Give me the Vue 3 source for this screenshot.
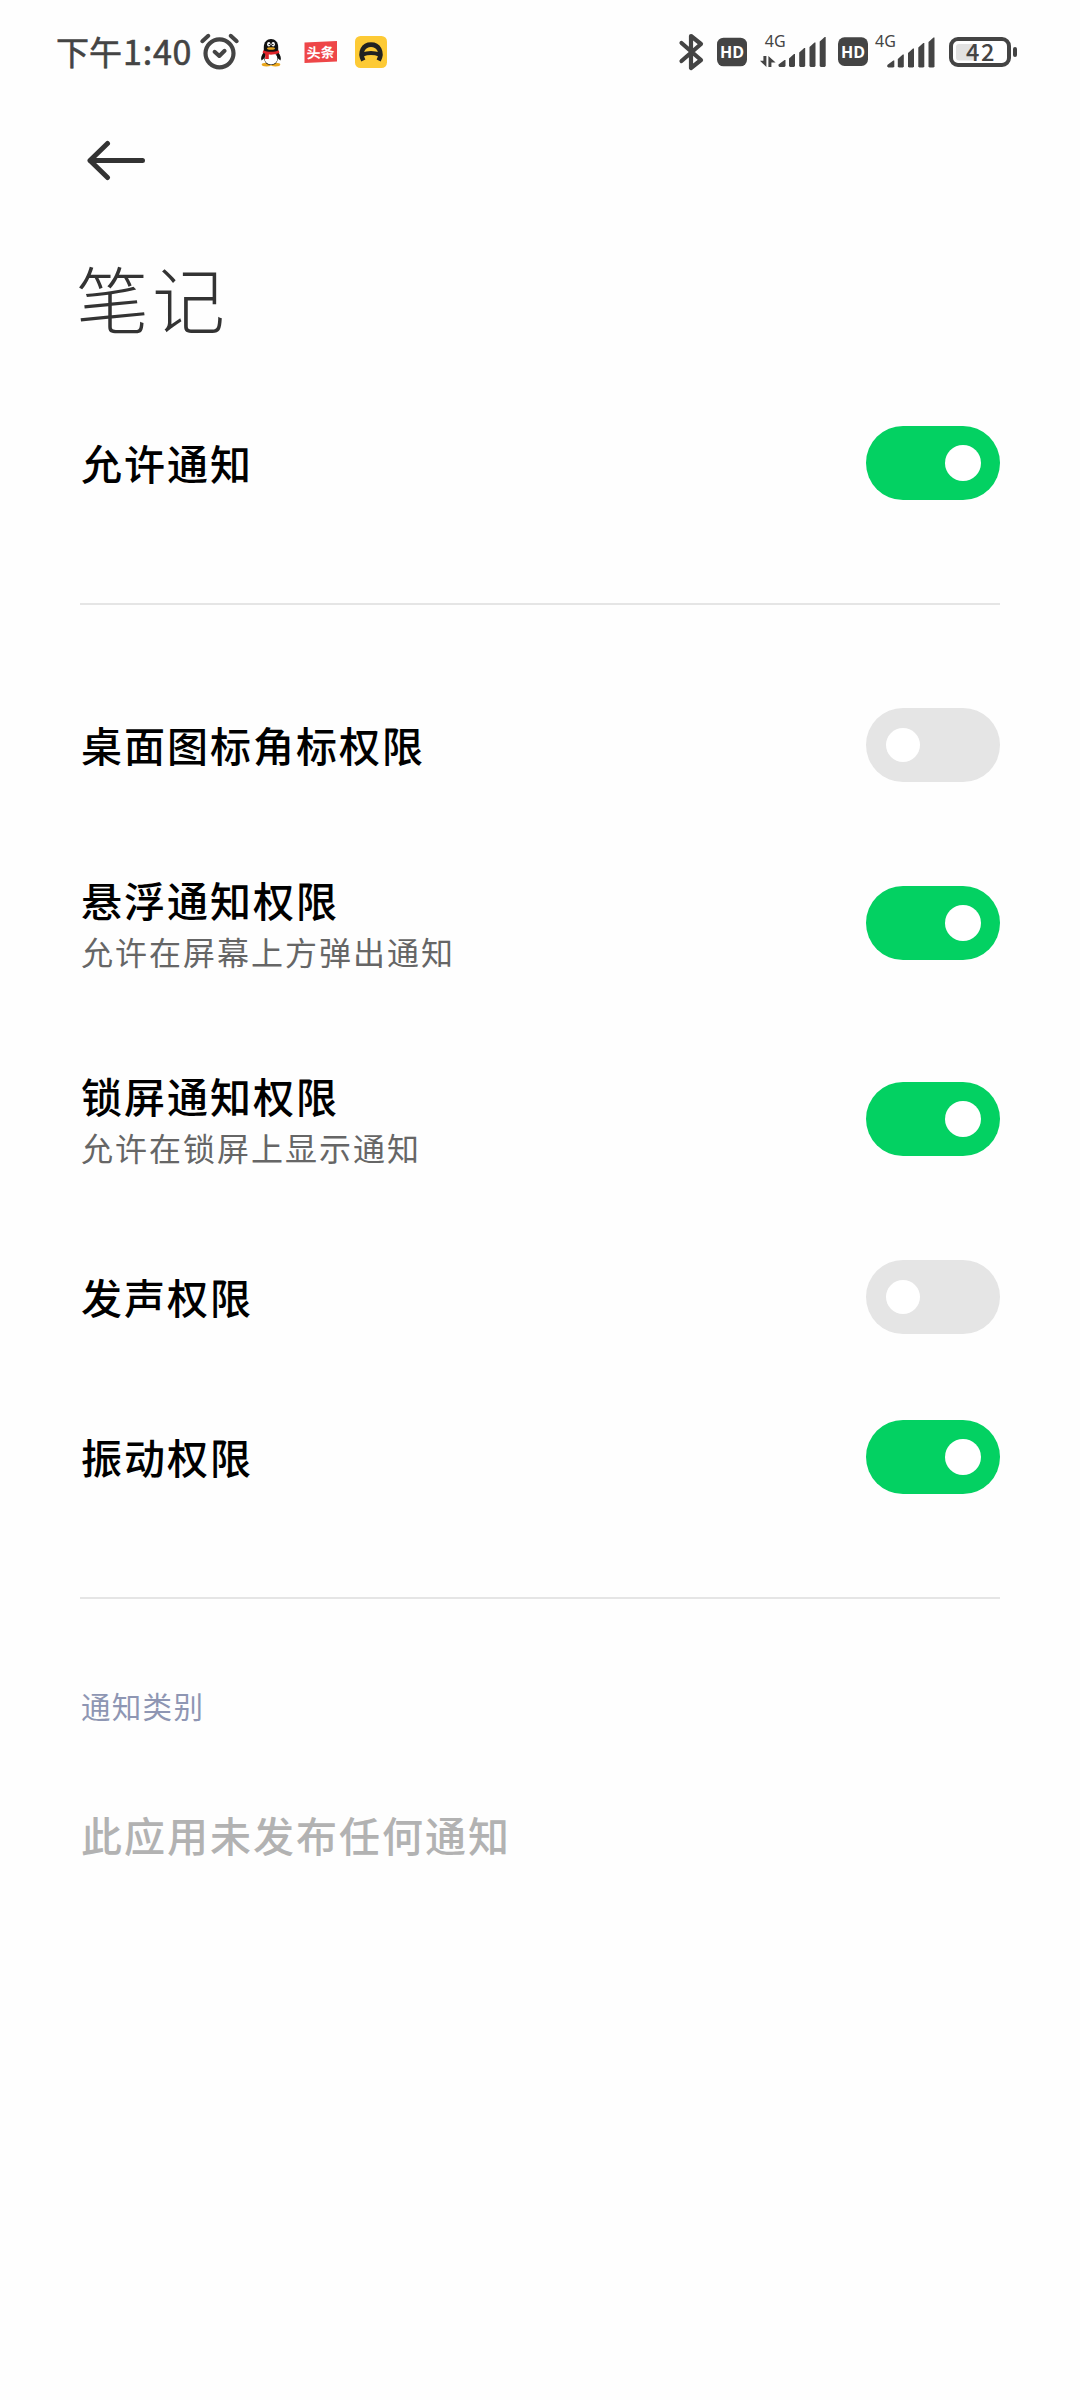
<template>
  <div class="screen">
    <!-- Status bar -->
    <header class="status-bar">
      <div class="status-left">
        <span class="clock">下午<span class="digits">1:40</span></span>

        <svg class="icon-alarm" width="40" height="40" viewBox="0 0 40 40">
          <g fill="none" stroke="#444" stroke-linecap="round" stroke-linejoin="round">
            <circle cx="19.5" cy="21.3" r="14" stroke-width="4.2" />
            <path d="M2.3 9.2 8.3 3.8M36.7 9.2 30.7 3.8" stroke-width="4" />
            <path d="M14.6 19.8 19.3 24 24.6 18.8" stroke-width="4" />
          </g>
        </svg>

        <svg class="icon-qq" width="22" height="40" viewBox="0 0 22 40">
          <ellipse cx="6.5" cy="32.6" rx="4.8" ry="1.9" fill="#e9a61c" />
          <ellipse cx="15.5" cy="32.6" rx="4.8" ry="1.9" fill="#e9a61c" />
          <path d="M4 20C1.5 23 .5 26 1.5 28.5L4 26.5C5 31 7 33 11 33S17 31 18 26.5L20.5 28.5C21.5 26 20.5 23 18 20Z" fill="#111" />
          <ellipse cx="11" cy="26.5" rx="6.4" ry="6" fill="#fff" />
          <path d="M3.8 20V15C3.8 10 7 7 11 7S18.2 10 18.2 15V20Z" fill="#111" />
          <ellipse cx="8.8" cy="12.3" rx="1.7" ry="2.2" fill="#fff" />
          <ellipse cx="13.2" cy="12.3" rx="1.7" ry="2.2" fill="#fff" />
          <circle cx="9.3" cy="12.5" r=".8" fill="#111" />
          <circle cx="12.8" cy="12.5" r=".8" fill="#111" />
          <ellipse cx="11" cy="16.5" rx="4" ry="1.3" fill="#e9a61c" />
          <path d="M3.2 18.2C8 20.3 14 20.3 18.8 18.2L19.4 20.8C15 22.8 11 23 8.8 22.6V27H5.2V21.8L2.6 20.8Z" fill="#e0242b" />
        </svg>

        <svg class="icon-toutiao" width="34" height="40" viewBox="0 0 34 40">
          <path d="M.5 10.5 33 9V29.5L.5 31Z" fill="#ee4648" />
          <text x="2.5" y="25.800" class="toutiao-text" transform="rotate(-2 17 20)">头条</text>
        </svg>

        <svg class="icon-app" width="32" height="40" viewBox="0 0 32 40">
          <rect y="4" width="32" height="32" rx="5.5" fill="#fdca35" />
          <path d="M8.300 28.500C4 20 8.500 12.600 16 12.600S28 20 23.700 28.500" fill="none" stroke="#222" stroke-width="4.600" />
          <path d="M7.500 22.500Q16 19.500 24.500 22.500" fill="none" stroke="#222" stroke-width="4" />
        </svg>
      </div>

      <div class="status-right">
        <svg class="icon-bluetooth" width="26" height="40" viewBox="0 0 26 40">
          <path d="M3.500 11 23 28 13 36V4L23 12 3.500 29" fill="none" stroke="#444" stroke-width="4.200" stroke-linecap="round" stroke-linejoin="round" />
        </svg>

        <svg class="icon-hd" width="30" height="40" viewBox="0 0 30 40">
          <rect y="5.700" width="30" height="28.600" rx="6.500" fill="#444" />
          <text x="15" y="26" class="hd-text" text-anchor="middle">HD</text>
        </svg>

        <svg class="icon-signal-data" width="67" height="40" viewBox="0 0 67 40">
          <text x="4.800" y="14.800" class="net-text">4G</text>
          <path d="M3.400 24H6.400V35L0 28.700H3.400ZM8.400 24 15.600 30.400H11.400V35H8.400Z" fill="#444" />
          <g fill="#444">
            <path v-for="bar in signalBars" :key="bar.x" :d="barPath(bar, 18.500, 35)" />
          </g>
        </svg>

        <svg class="icon-hd second" width="30" height="40" viewBox="0 0 30 40">
          <rect y="5.300" width="30" height="28.600" rx="6.500" fill="#444" />
          <text x="15" y="25.700" class="hd-text" text-anchor="middle">HD</text>
        </svg>

        <svg class="icon-signal" width="62" height="40" viewBox="0 0 62 40">
          <text x="0" y="14.800" class="net-text">4G</text>
          <g fill="#444">
            <path v-for="bar in signalBars" :key="bar.x" :d="barPath(bar, 12.300, 35.600)" />
          </g>
        </svg>

        <svg class="icon-battery" width="69" height="40" viewBox="0 0 69 40">
          <rect x="2" y="7" width="58" height="26" rx="7" fill="#fff" stroke="#444" stroke-width="4" />
          <rect x="7" y="12" width="21" height="16.5" rx="3" fill="#e2e2e2" />
          <rect x="64" y="15" width="4" height="10" rx="2" fill="#444" />
          <text x="32" y="28.600" class="battery-text" text-anchor="middle">{{ battery }}</text>
        </svg>
      </div>
    </header>

    <!-- Back button -->
    <nav class="nav">
      <button class="btn-back" title="返回">
        <svg width="60" height="42" viewBox="0 0 60 42">
          <path d="M55.5 20.500H3M20.500 3.500 3 20.500 20.500 37.500" fill="none" stroke="#333" stroke-width="5" stroke-linecap="round" stroke-linejoin="round" />
        </svg>
      </button>
    </nav>

    <h1 class="title">笔记</h1>

    <main class="settings">
      <section v-for="(group, i) in groups" :key="i" class="group">
        <div
          v-for="item in group"
          :key="item.label"
          class="row"
          :class="{ double: item.desc }"
        >
          <div class="row-text">
            <span class="label">{{ item.label }}</span>
            <span v-if="item.desc" class="desc">{{ item.desc }}</span>
          </div>
          <button
            class="toggle"
            :class="{ on: item.enabled }"
            @click="item.enabled = !item.enabled"
          >
            <span class="knob"></span>
          </button>
        </div>
      </section>
    </main>

    <h2 class="category">通知类别</h2>
    <p class="empty">此应用未发布任何通知</p>
  </div>
</template>

<script setup>
import { ref } from 'vue'

const battery = ref(42)

const groups = ref([
  [{ label: '允许通知', enabled: true }],
  [
    { label: '桌面图标角标权限', enabled: false },
    { label: '悬浮通知权限', desc: '允许在屏幕上方弹出通知', enabled: true },
    { label: '锁屏通知权限', desc: '允许在锁屏上显示通知', enabled: true },
    { label: '发声权限', enabled: false },
    { label: '振动权限', enabled: true }
  ]
])

const signalBars = [
  { x: 0, h: 7 },
  { x: 10.5, h: 13 },
  { x: 20.7, h: 19 },
  { x: 31, h: 24.5 },
  { x: 41.2, h: 30 }
]

// slanted top, left side is lower
function barPath(bar, offset, bottom) {
  const x = bar.x + offset
  const w = bar.x === 0 ? 7 : 6
  const top = bottom - bar.h
  return `M${x} ${bottom - 1}V${top + 4.5}L${x + w - 1} ${top}H${x + w}V${bottom - 1}L${x + w - 1} ${bottom}H${x + 1}Z`
}
</script>

<style>
body {
  background: #fefefe;
}
</style>

<style scoped>
.screen {
  width: 1080px;
  height: 2400px;
  box-sizing: border-box;
  background: #fefefe;
  font-family: 'Noto Sans CJK SC', sans-serif;
  overflow: hidden;
}

.status-bar {
  height: 104px;
  box-sizing: border-box;
  padding: 32px 62px 32px 56px;
  display: flex;
  justify-content: space-between;
}

.status-bar svg {
  overflow: visible;
}

.status-left,
.status-right {
  display: flex;
  align-items: center;
}

.clock {
  width: 144px;
  font-size: 33px;
  line-height: 40px;
  padding-bottom: 2px;
  color: #444;
  white-space: nowrap;
  -webkit-text-stroke: 0.6px #444;
}

.digits {
  margin-left: 1px;
  font-size: 34px;
  letter-spacing: 0.8px;
}

.icon-qq {
  margin-left: 20px;
}

.icon-toutiao {
  margin-left: 22px;
}

.icon-app {
  margin-left: 17px;
}

.icon-hd {
  margin-left: 13px;
}

.icon-hd.second {
  margin-left: 11px;
}

.icon-signal-data {
  margin-left: 13px;
}

.icon-signal {
  margin-left: 7px;
}

.icon-battery {
  margin-left: 12px;
}

.toutiao-text {
  font-size: 14px;
  font-weight: 700;
  fill: #fff;
}

.hd-text {
  font-family: 'Open Sans', sans-serif;
  font-size: 16px;
  font-weight: 700;
  fill: #fff;
}

.net-text {
  font-family: 'Noto Sans', sans-serif;
  font-size: 16px;
  fill: #444;
}

.battery-text {
  font-size: 23.5px;
  font-weight: 500;
  letter-spacing: 1.5px;
  fill: #444;
}

.nav {
  height: 116px;
  padding: 36px 87px 0;
  box-sizing: border-box;
}

.btn-back {
  display: block;
  padding: 0;
  border: none;
  background: transparent;
  cursor: pointer;
}

.btn-back svg {
  display: block;
}

.title {
  margin: 0;
  height: 163px;
  box-sizing: border-box;
  padding: 24px 76px 0;
  font-size: 73px;
  font-weight: 300;
  line-height: 104px;
  letter-spacing: 3px;
  color: #333;
}

.settings {
  padding: 0 80px;
}

.group {
  padding-bottom: 60px;
  border-bottom: 2px solid #e5e5e5;
}

.group + .group {
  padding-top: 60px;
}

.row {
  height: 160px;
  display: flex;
  align-items: center;
  justify-content: space-between;
}

.row.double {
  height: 196px;
}

.row-text {
  display: flex;
  flex-direction: column;
  padding: 0 0 3px 1px;
}

.row.double .row-text {
  padding-bottom: 0;
}

.label {
  font-size: 41px;
  font-weight: 500;
  line-height: 56px;
  letter-spacing: 2px;
  color: #000;
}

.desc {
  font-size: 32px;
  line-height: 48px;
  letter-spacing: 2px;
  color: #666;
}

.toggle {
  width: 134px;
  height: 74px;
  padding: 0 20px;
  border: none;
  border-radius: 37px;
  background: #e5e5e5;
  display: flex;
  align-items: center;
  cursor: pointer;
}

.toggle.on {
  padding: 0 19px;
  justify-content: flex-end;
  background: #03d162;
}

.knob {
  width: 34px;
  height: 34px;
  border-radius: 50%;
  background: #fff;
}

.toggle.on .knob {
  width: 36px;
  height: 36px;
}

.category {
  margin: 84px 0 0;
  padding: 0 81px;
  font-size: 29.5px;
  font-weight: 400;
  line-height: 44px;
  letter-spacing: 1.3px;
  color: #8e96b3;
}

.empty {
  margin: 77px 0 0;
  padding: 0 81px;
  font-size: 41px;
  font-weight: 500;
  line-height: 60px;
  letter-spacing: 2px;
  color: #b2b2b2;
}
</style>
